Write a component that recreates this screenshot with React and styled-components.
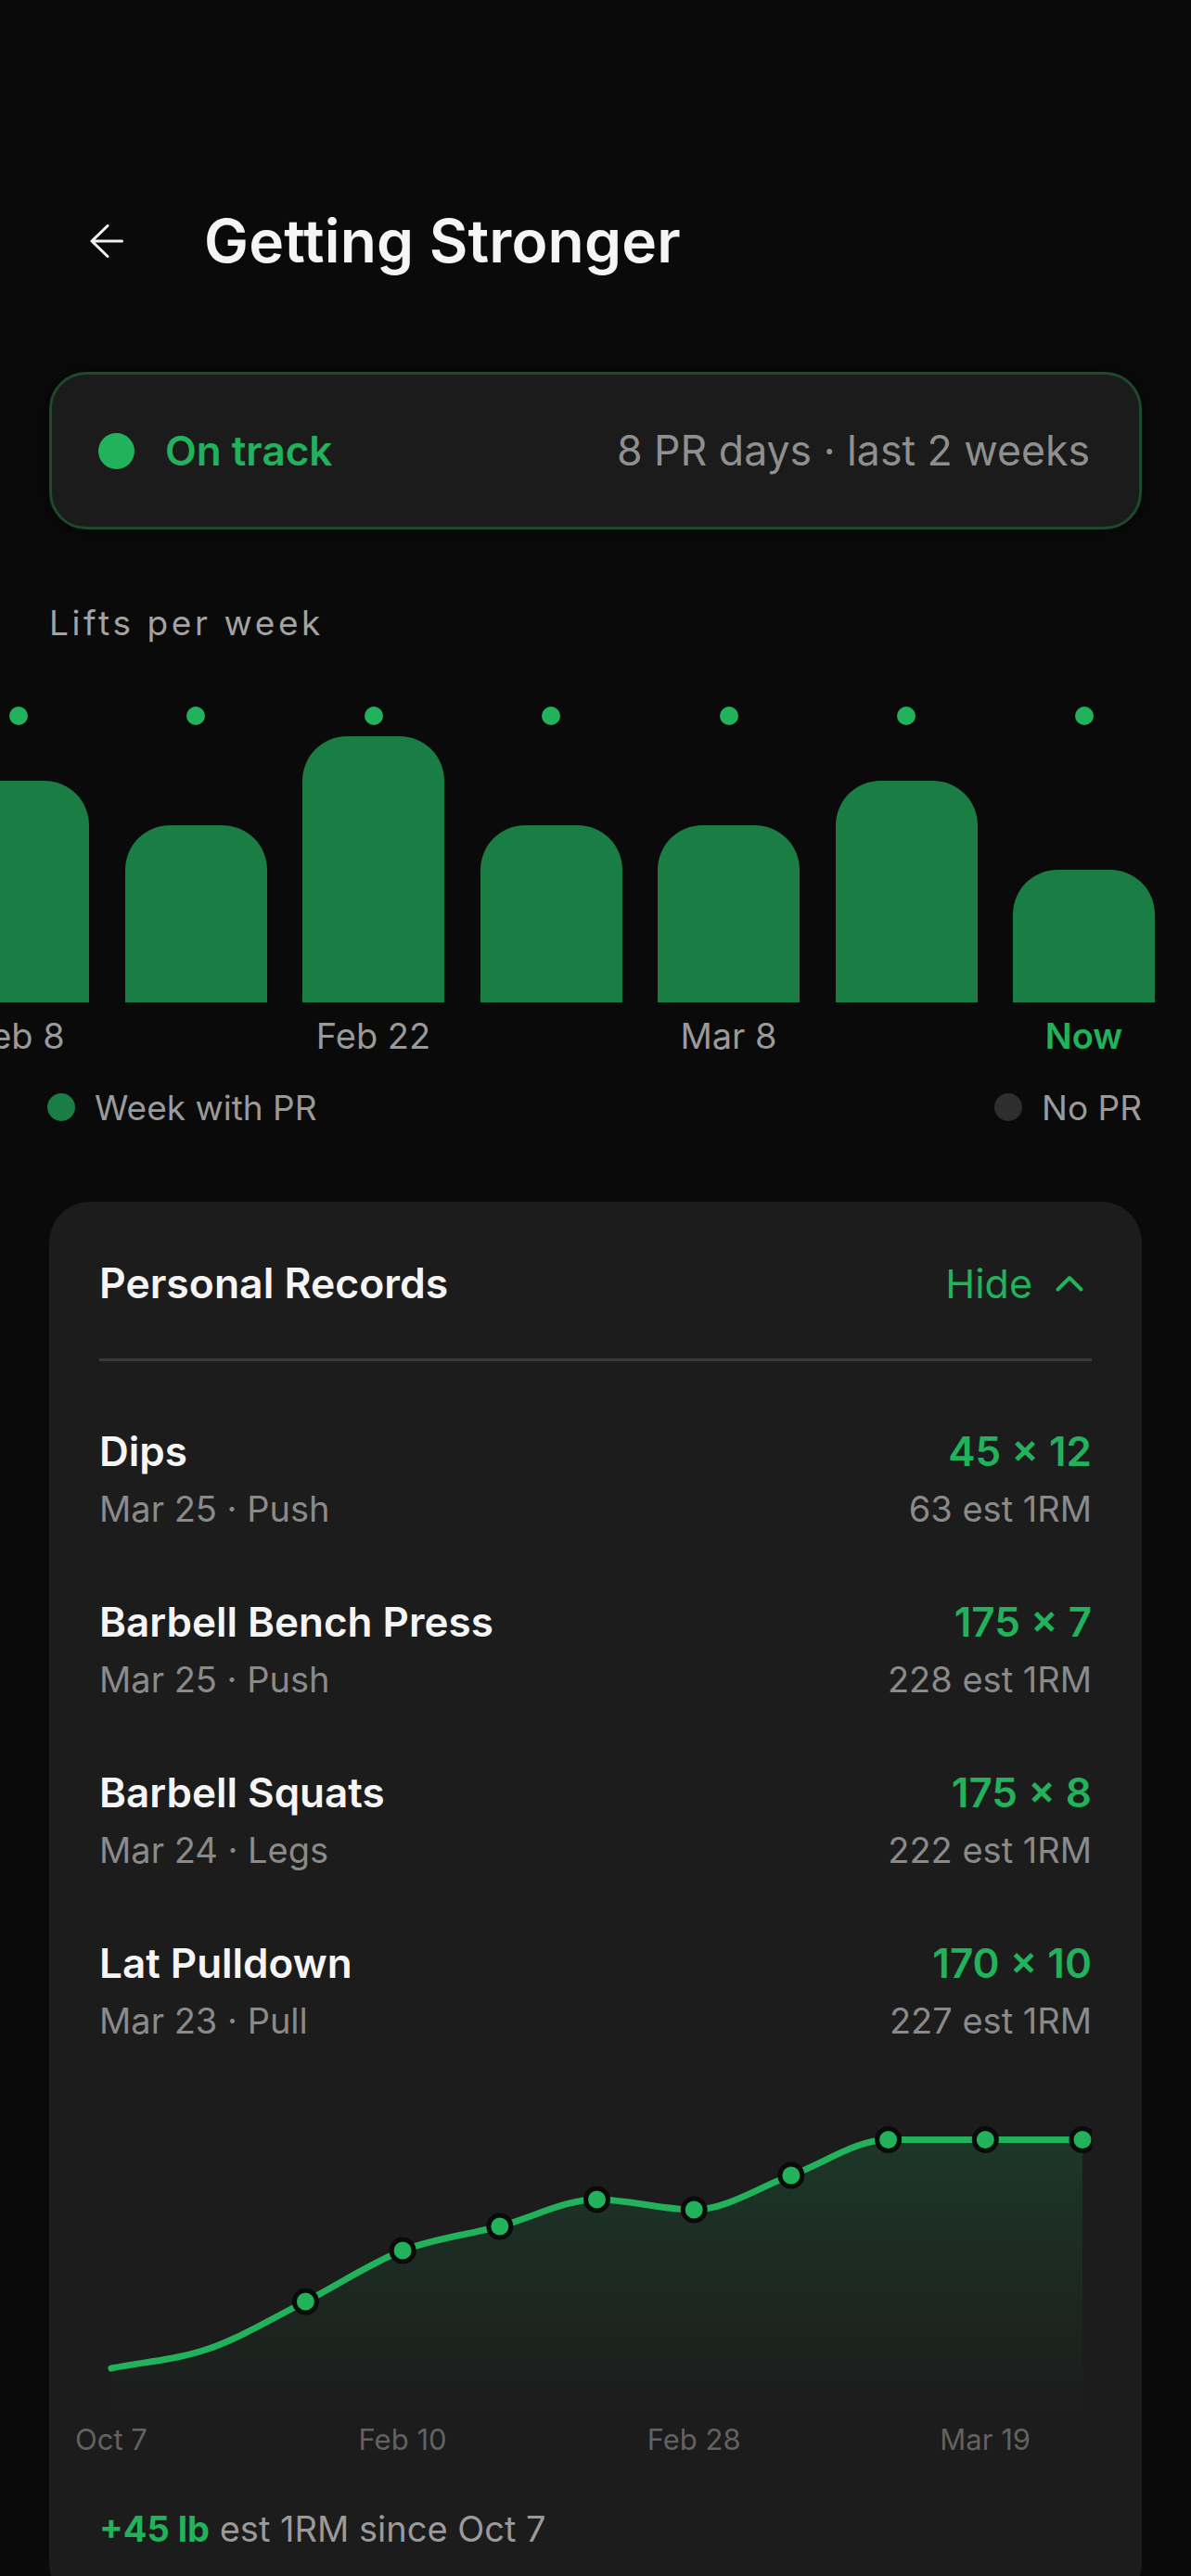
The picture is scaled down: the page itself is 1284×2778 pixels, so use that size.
import React from 'react';
import styled, { createGlobalStyle } from 'styled-components';

const GREEN = '#21b25b';
const BAR_GREEN = '#1a7d43';
const FONT = 'Inter, "Noto Sans", "Liberation Sans", sans-serif';

const GlobalStyle = createGlobalStyle`
  html, body {
    margin: 0;
    padding: 0;
    background: #0a0a0a;
  }
  body {
    font-family: ${FONT};
    color: #f4f4f4;
    -webkit-font-smoothing: antialiased;
  }
  * {
    box-sizing: border-box;
  }
`;

const Page = styled.main`
  width: 1284px;
  min-height: 2778px;
  padding: 0 53px;
  overflow: hidden;
`;

const Header = styled.header`
  display: flex;
  align-items: center;
  gap: 87px;
  height: 120px;
  margin-top: 200px;
  padding-left: 44px;
`;

const BackButton = styled.button`
  display: flex;
  align-items: center;
  justify-content: center;
  width: 36px;
  height: 36px;
  padding: 0;
  border: 0;
  background: none;
  color: #f2f2f2;
`;

const Title = styled.h1`
  margin: 0;
  font-size: 64px;
  font-weight: 600;
  line-height: 1;
  letter-spacing: 0.2px;
  color: #f5f5f5;
`;

const StatusCard = styled.section`
  display: flex;
  align-items: center;
  justify-content: space-between;
  height: 170px;
  margin-top: 81px;
  padding: 0 53px 0 50px;
  border: 3px solid #1d4a2c;
  border-radius: 40px;
  background: #1b1b1b;
  box-shadow: 0 0 18px rgba(0, 0, 0, 0.6);
`;

const StatusLeft = styled.div`
  display: flex;
  align-items: center;
  gap: 33px;
`;

const Dot = styled.span`
  flex: 0 0 auto;
  width: ${p => p.size}px;
  height: ${p => p.size}px;
  border-radius: 50%;
  background: ${p => p.color};
`;

const StatusText = styled.span`
  font-size: 44px;
  font-weight: 600;
  color: ${GREEN};
`;

const StatusMeta = styled.span`
  font-size: 44.6px;
  color: #8f8f8f;
`;

const SectionLabel = styled.h2`
  margin: 79px 0 0;
  font-size: 37px;
  font-weight: 400;
  line-height: 44px;
  letter-spacing: 3.6px;
  color: #a3a3a3;
`;

const WeekChart = styled.div`
  display: flex;
  justify-content: flex-end;
  gap: 38.5px;
  margin: 68px -53px 0;
  padding-right: 39px;
  overflow: hidden;
`;

const WeekColumn = styled.div`
  flex: 0 0 153px;
  display: flex;
  flex-direction: column;
  align-items: center;
`;

const BarSlot = styled.div`
  display: flex;
  align-items: flex-end;
  width: 100%;
  height: 299px;
`;

const Bar = styled.div`
  width: 100%;
  border-radius: 48px 48px 0 0;
  background: ${BAR_GREEN};
`;

const WeekLabel = styled.span`
  height: 46px;
  margin-top: 13px;
  font-size: 38px;
  line-height: 46px;
  white-space: nowrap;
  font-weight: ${p => (p.current ? 600 : 400)};
  color: ${p => (p.current ? GREEN : '#9a9a9a')};
`;

const Legend = styled.div`
  display: flex;
  align-items: center;
  justify-content: space-between;
  height: 46px;
  margin: 31px 0 0 -2px;
`;

const LegendItem = styled.div`
  display: flex;
  align-items: center;
  gap: 21px;
  font-size: 37px;
  color: #9a9a9a;
`;

const RecordsCard = styled.section`
  margin-top: 79px;
  padding: 44px 54px 60px;
  border-radius: 44px;
  background: #1c1c1c;
`;

const CardHeader = styled.div`
  display: flex;
  align-items: center;
  justify-content: space-between;
  height: 88px;
`;

const CardTitle = styled.h3`
  margin: 0;
  font-size: 44.5px;
  font-weight: 600;
  color: #f5f5f5;
`;

const HideButton = styled.button`
  display: flex;
  align-items: center;
  gap: 25px;
  padding: 0 9px 0 0;
  border: 0;
  background: none;
  font-family: ${FONT};
  font-size: 43px;
  color: ${GREEN};
`;

const Divider = styled.hr`
  height: 3px;
  margin: 37px 0 0;
  border: 0;
  background: #393939;
`;

const RecordList = styled.ul`
  display: flex;
  flex-direction: column;
  gap: 75px;
  margin: 72px 0 0;
  padding: 0;
  list-style: none;
`;

const RecordRow = styled.li`
  display: flex;
  justify-content: space-between;
`;

const RecordCol = styled.div`
  display: flex;
  flex-direction: column;
  align-items: ${p => (p.right ? 'flex-end' : 'flex-start')};
  gap: 15px;
`;

const RecordName = styled.span`
  font-size: 44px;
  font-weight: 600;
  line-height: 50px;
  color: #f5f5f5;
`;

const RecordValue = styled.span`
  font-size: 44px;
  font-weight: 600;
  line-height: 50px;
  color: ${GREEN};
`;

const RecordMeta = styled.span`
  font-size: 38px;
  line-height: 44px;
  color: #8a8a8a;
`;

const TrendSvg = styled.svg`
  display: block;
  margin-top: 79px;
`;

const AxisRow = styled.div`
  display: grid;
  grid-template-columns: repeat(11, 104.7px);
  height: 38px;
  margin: 12px 0 0 -39.35px;
`;

const AxisLabel = styled.span`
  font-size: 31px;
  line-height: 38px;
  text-align: center;
  white-space: nowrap;
  color: #626262;
`;

const Summary = styled.p`
  margin: 55px 0 0;
  font-size: 38px;
  line-height: 44px;
  color: #9a9a9a;

  strong {
    font-weight: 700;
    color: ${GREEN};
  }
`;

const weeks = [
  { value: 4, label: 'Jan 25' },
  { value: 5, label: 'Feb 8' },
  { value: 4 },
  { value: 6, label: 'Feb 22' },
  { value: 4 },
  { value: 4, label: 'Mar 8' },
  { value: 5 },
  { value: 3, label: 'Now', current: true },
];

const records = [
  { name: 'Dips', meta: 'Mar 25 · Push', best: '45 × 12', est: '63 est 1RM' },
  { name: 'Barbell Bench Press', meta: 'Mar 25 · Push', best: '175 × 7', est: '228 est 1RM' },
  { name: 'Barbell Squats', meta: 'Mar 24 · Legs', best: '175 × 8', est: '222 est 1RM' },
  { name: 'Lat Pulldown', meta: 'Mar 23 · Pull', best: '170 × 10', est: '227 est 1RM' },
];

// est 1RM trend, y in svg units (top = best)
const trend = [274, 253, 202, 147, 121, 92, 103, 66, 27.5, 27.5, 27.5];
const axis = { 0: 'Oct 7', 3: 'Feb 10', 6: 'Feb 28', 9: 'Mar 19' };
const CHART_W = 1070;
const CHART_H = 320;
const STEP = 104.7;

function monotonePath(pts) {
  const n = pts.length;
  const d = [];
  for (let i = 0; i < n - 1; i++) {
    d.push((pts[i + 1][1] - pts[i][1]) / (pts[i + 1][0] - pts[i][0]));
  }
  const m = pts.map((_, i) => {
    if (i === 0) return d[0];
    if (i === n - 1) return d[n - 2];
    if (d[i - 1] * d[i] <= 0) return 0;
    return (d[i - 1] + d[i]) / 2;
  });
  let path = `M${pts[0][0]},${pts[0][1]}`;
  for (let i = 0; i < n - 1; i++) {
    const [x0, y0] = pts[i];
    const [x1, y1] = pts[i + 1];
    const h = (x1 - x0) / 3;
    path += ` C${x0 + h},${y0 + m[i] * h} ${x1 - h},${y1 - m[i + 1] * h} ${x1},${y1}`;
  }
  return path;
}

const BackArrow = () => (
  <svg width="36" height="36" viewBox="0 0 36 36" fill="none" stroke="currentColor" strokeWidth="3" strokeLinecap="round" strokeLinejoin="round">
    <path d="M19 1.5 2 18l17 16.5M2 18h32.5" />
  </svg>
);

const ChevronUp = () => (
  <svg width="30" height="18" viewBox="0 0 30 18" fill="none" stroke="currentColor" strokeWidth="4" strokeLinecap="round" strokeLinejoin="round">
    <path d="M2.5 15.5 15 3l12.5 12.5" />
  </svg>
);

function TrendChart() {
  const pts = trend.map((y, i) => [13 + i * STEP, y]);
  const line = monotonePath(pts);
  const last = pts[pts.length - 1];
  const area = `${line} L${last[0]},${CHART_H} L${pts[0][0]},${CHART_H} Z`;

  return (
    <>
      <TrendSvg width={CHART_W} height={CHART_H} viewBox={`0 0 ${CHART_W} ${CHART_H}`}>
        <defs>
          <linearGradient id="trendFill" x1="0" y1="0" x2="0" y2="1">
            <stop offset="0%" stopColor={GREEN} stopOpacity="0.18" />
            <stop offset="100%" stopColor={GREEN} stopOpacity="0" />
          </linearGradient>
        </defs>
        <path d={area} fill="url(#trendFill)" />
        <path d={line} fill="none" stroke={GREEN} strokeWidth="7" strokeLinecap="round" />
        {pts.slice(2).map(([x, y]) => (
          <circle key={x} cx={x} cy={y} r="12" fill={GREEN} stroke="#0a0a0a" strokeWidth="5" />
        ))}
      </TrendSvg>
      <AxisRow>
        {trend.map((_, i) => (
          <AxisLabel key={i}>{axis[i] || ''}</AxisLabel>
        ))}
      </AxisRow>
    </>
  );
}

export default function App() {
  return (
    <Page>
      <GlobalStyle />
      <Header>
        <BackButton aria-label="Back">
          <BackArrow />
        </BackButton>
        <Title>Getting Stronger</Title>
      </Header>

      <StatusCard>
        <StatusLeft>
          <Dot size={39} color={GREEN} />
          <StatusText>On track</StatusText>
        </StatusLeft>
        <StatusMeta>8 PR days · last 2 weeks</StatusMeta>
      </StatusCard>

      <SectionLabel>Lifts per week</SectionLabel>
      <WeekChart>
        {weeks.map((w, i) => (
          <WeekColumn key={i}>
            <Dot size={20} color={GREEN} />
            <BarSlot>
              <Bar style={{ height: w.value * 47.8 }} />
            </BarSlot>
            <WeekLabel current={w.current}>{w.label || ''}</WeekLabel>
          </WeekColumn>
        ))}
      </WeekChart>

      <Legend>
        <LegendItem>
          <Dot size={30} color={BAR_GREEN} />
          Week with PR
        </LegendItem>
        <LegendItem>
          <Dot size={30} color="#2e2e2e" />
          No PR
        </LegendItem>
      </Legend>

      <RecordsCard>
        <CardHeader>
          <CardTitle>Personal Records</CardTitle>
          <HideButton>
            Hide
            <ChevronUp />
          </HideButton>
        </CardHeader>
        <Divider />
        <RecordList>
          {records.map(r => (
            <RecordRow key={r.name}>
              <RecordCol>
                <RecordName>{r.name}</RecordName>
                <RecordMeta>{r.meta}</RecordMeta>
              </RecordCol>
              <RecordCol right>
                <RecordValue>{r.best}</RecordValue>
                <RecordMeta>{r.est}</RecordMeta>
              </RecordCol>
            </RecordRow>
          ))}
        </RecordList>

        <TrendChart />

        <Summary>
          <strong>+45 lb</strong> est 1RM since Oct 7
        </Summary>
      </RecordsCard>
    </Page>
  );
}
